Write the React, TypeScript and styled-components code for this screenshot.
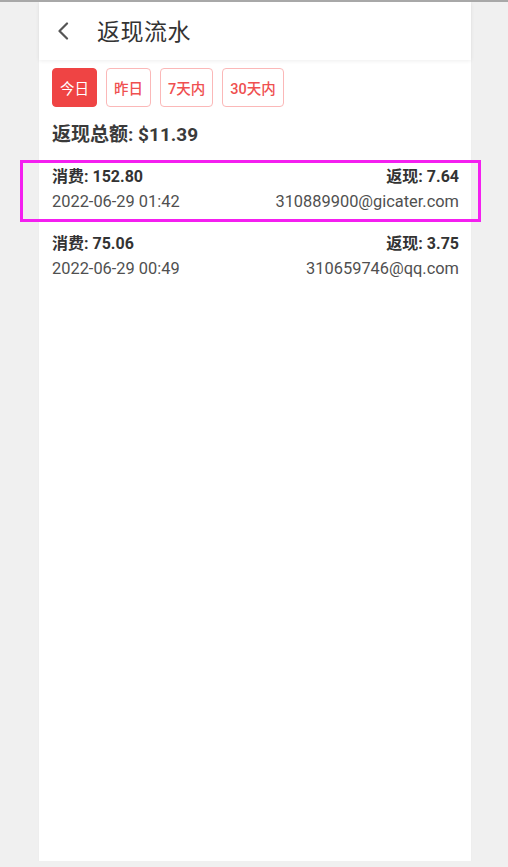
import styled, { createGlobalStyle } from "styled-components";

const GlobalStyle = createGlobalStyle`
  html, body {
    margin: 0;
    padding: 0;
    background: #f0f0f0;
  }
  body {
    border-top: 2px solid #a8a8a8;
    font-family: Roboto, "Noto Sans CJK SC", sans-serif;
  }
`;

const Page = styled.div`
  width: 432px;
  height: 859px;
  margin-left: 39px;
  background: #ffffff;
  box-shadow: 0 1px 1px rgba(0, 0, 0, 0.06);
`;

const Header = styled.header`
  height: 58px;
  display: flex;
  align-items: center;
  padding-left: 18px;
  gap: 28px;
  box-shadow: 0 1px 4px rgba(0, 0, 0, 0.07);
`;

const Title = styled.h1`
  margin: 0;
  margin-top: -2px;
  font-size: 23px;
  font-weight: 400;
  color: #333;
  letter-spacing: 0.5px;
`;

const Body = styled.div`
  padding: 8px 12px 0 13px;
`;

const Tabs = styled.div`
  display: flex;
  gap: 9px;
`;

const Tab = styled.button<{ $active?: boolean }>`
  height: 39px;
  padding: 0 7px;
  min-width: 44px;
  border-radius: 4px;
  border: 1px solid ${(p) => (p.$active ? "#ef4444" : "#fbb8b8")};
  background: ${(p) => (p.$active ? "#ef4444" : "#fff")};
  color: ${(p) => (p.$active ? "#fff" : "#ef5050")};
  font-family: Roboto, "Noto Sans CJK SC", sans-serif;
  font-size: 14.5px;
  font-weight: ${(p) => (p.$active ? 400 : 500)};
`;

const Total = styled.div`
  margin-top: 15px;
  font-size: 19px;
  font-weight: 700;
  color: #3a3a3a;
  line-height: 26px;
`;

const List = styled.div`
  margin-top: 18px;
  display: flex;
  flex-direction: column;
  gap: 20px;
`;

const Row = styled.div<{ $marked?: boolean }>`
  position: relative;
  display: grid;
  grid-template-columns: 1fr auto;
  row-gap: 3px;

  &::after {
    content: "";
    display: ${(p) => (p.$marked ? "block" : "none")};
    position: absolute;
    left: -32px;
    right: -22px;
    top: -6px;
    bottom: -9px;
    border: 3px solid #f41ff0;
    pointer-events: none;
  }
`;

const Strong = styled.span<{ $right?: boolean }>`
  font-size: 16px;
  font-weight: 700;
  color: #333;
  line-height: 22px;
  text-align: ${(p) => (p.$right ? "right" : "left")};
`;

const Light = styled.span<{ $right?: boolean }>`
  font-size: 16.4px;
  color: #505050;
  line-height: 22px;
  text-align: ${(p) => (p.$right ? "right" : "left")};
`;

const records = [
  { spend: "152.80", back: "7.64", time: "2022-06-29 01:42", mail: "310889900@gicater.com", marked: true },
  { spend: "75.06", back: "3.75", time: "2022-06-29 00:49", mail: "310659746@qq.com" },
];

function BackIcon() {
  return (
    <svg width="12" height="18" viewBox="0 0 12 18">
      <path d="M10 1.5 L2.5 9 L10 16.5" fill="none" stroke="#555" strokeWidth="2.2" strokeLinecap="round" strokeLinejoin="round" />
    </svg>
  );
}

export default function App() {
  return (
    <>
      <GlobalStyle />
      <Page>
        <Header>
          <BackIcon />
          <Title>返现流水</Title>
        </Header>
        <Body>
          <Tabs>
            <Tab $active>今日</Tab>
            <Tab>昨日</Tab>
            <Tab>7天内</Tab>
            <Tab>30天内</Tab>
          </Tabs>
          <Total>返现总额: $11.39</Total>
          <List>
            {records.map((r) => (
              <Row key={r.time} $marked={r.marked}>
                <Strong>消费: {r.spend}</Strong>
                <Strong $right>返现: {r.back}</Strong>
                <Light>{r.time}</Light>
                <Light $right>{r.mail}</Light>
              </Row>
            ))}
          </List>
        </Body>
      </Page>
    </>
  );
}
